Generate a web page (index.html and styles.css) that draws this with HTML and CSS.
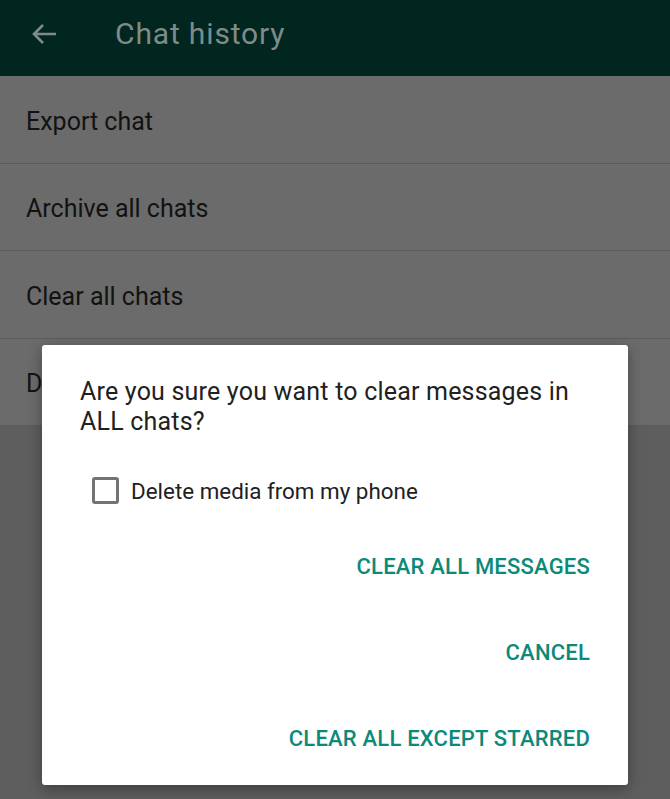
FILE: index.html
```html
<!DOCTYPE html>
<html lang="en">
<head>
<meta charset="utf-8">
<title>Chat history</title>
<link rel="stylesheet" href="styles.css">
</head>
<body>
<div class="app">
  <header class="appbar">
    <span class="back" aria-label="Back">
      <svg width="26" height="22" viewBox="0 0 26 22"><path d="M25 11H3M12 2L3 11l9 9" fill="none" stroke="currentColor" stroke-width="2.6"/></svg>
    </span>
    <h1 class="title">Chat history</h1>
  </header>
  <ul class="list">
    <li class="item">Export chat</li>
    <li class="item">Archive all chats</li>
    <li class="item">Clear all chats</li>
    <li class="item">Delete all chats</li>
  </ul>
  <div class="dialog" role="dialog">
    <p class="message">Are you sure you want to clear messages in ALL chats?</p>
    <label class="check">
      <span class="box"></span>
      <span class="check-label">Delete media from my phone</span>
    </label>
    <div class="actions">
      <button class="btn">CLEAR ALL MESSAGES</button>
      <button class="btn">CANCEL</button>
      <button class="btn">CLEAR ALL EXCEPT STARRED</button>
    </div>
  </div>
</div>
</body>
</html>
```
FILE: styles.css
```css
* { box-sizing: border-box; }
html, body { margin: 0; padding: 0; }
body {
  font-family: Roboto, "Liberation Sans", sans-serif;
  background: #5e5e5e;
}
.app {
  position: relative;
  width: 670px;
  height: 799px;
  overflow: hidden;
  background: #5e5e5e;
}
.appbar {
  height: 76px;
  background: #00261f;
  display: flex;
  align-items: center;
  padding-left: 31px;
  color: #7e8c88;
  box-shadow: 0 1px 2px rgba(0,0,0,0.3);
}
.back { display: flex; width: 26px; height: 22px; margin-top: -9px; }
.title {
  margin: -9px 0 0 58px;
  font-size: 30px;
  font-weight: 400;
  letter-spacing: 0.85px;
}
.list {
  list-style: none;
  margin: 0;
  padding: 0;
  background: #6b6b6b;
}
.item {
  height: 87.5px;
  display: flex;
  align-items: center;
  padding-left: 26px;
  padding-top: 4px;
  font-size: 25px;
  color: #121212;
  border-bottom: 1px solid #5b5b5b;
}
.dialog {
  position: absolute;
  left: 42px;
  top: 345px;
  width: 586px;
  height: 440px;
  background: #fff;
  border-radius: 3px;
  box-shadow: 0 4px 14px rgba(0,0,0,0.35);
  padding: 32px 38px 0 38px;
}
.message {
  margin: 0;
  font-size: 25px;
  letter-spacing: 0.2px;
  line-height: 30px;
  color: #212121;
}
.check {
  display: flex;
  align-items: center;
  margin-top: 40px;
  margin-left: 12px;
}
.box {
  width: 27px;
  height: 27px;
  border: 3px solid #737373;
  border-radius: 3px;
}
.check-label {
  margin-left: 12px;
  font-size: 22.4px;
  color: #212121;
}
.actions {
  display: flex;
  flex-direction: column;
  align-items: flex-end;
  margin-top: 48px;
  gap: 56px;
}
.btn {
  border: 0;
  background: none;
  padding: 0;
  font-family: inherit;
  font-size: 22px;
  font-weight: 500;
  color: #0b8a7a;
  line-height: 30px;
  letter-spacing: 0.2px;
}
```
